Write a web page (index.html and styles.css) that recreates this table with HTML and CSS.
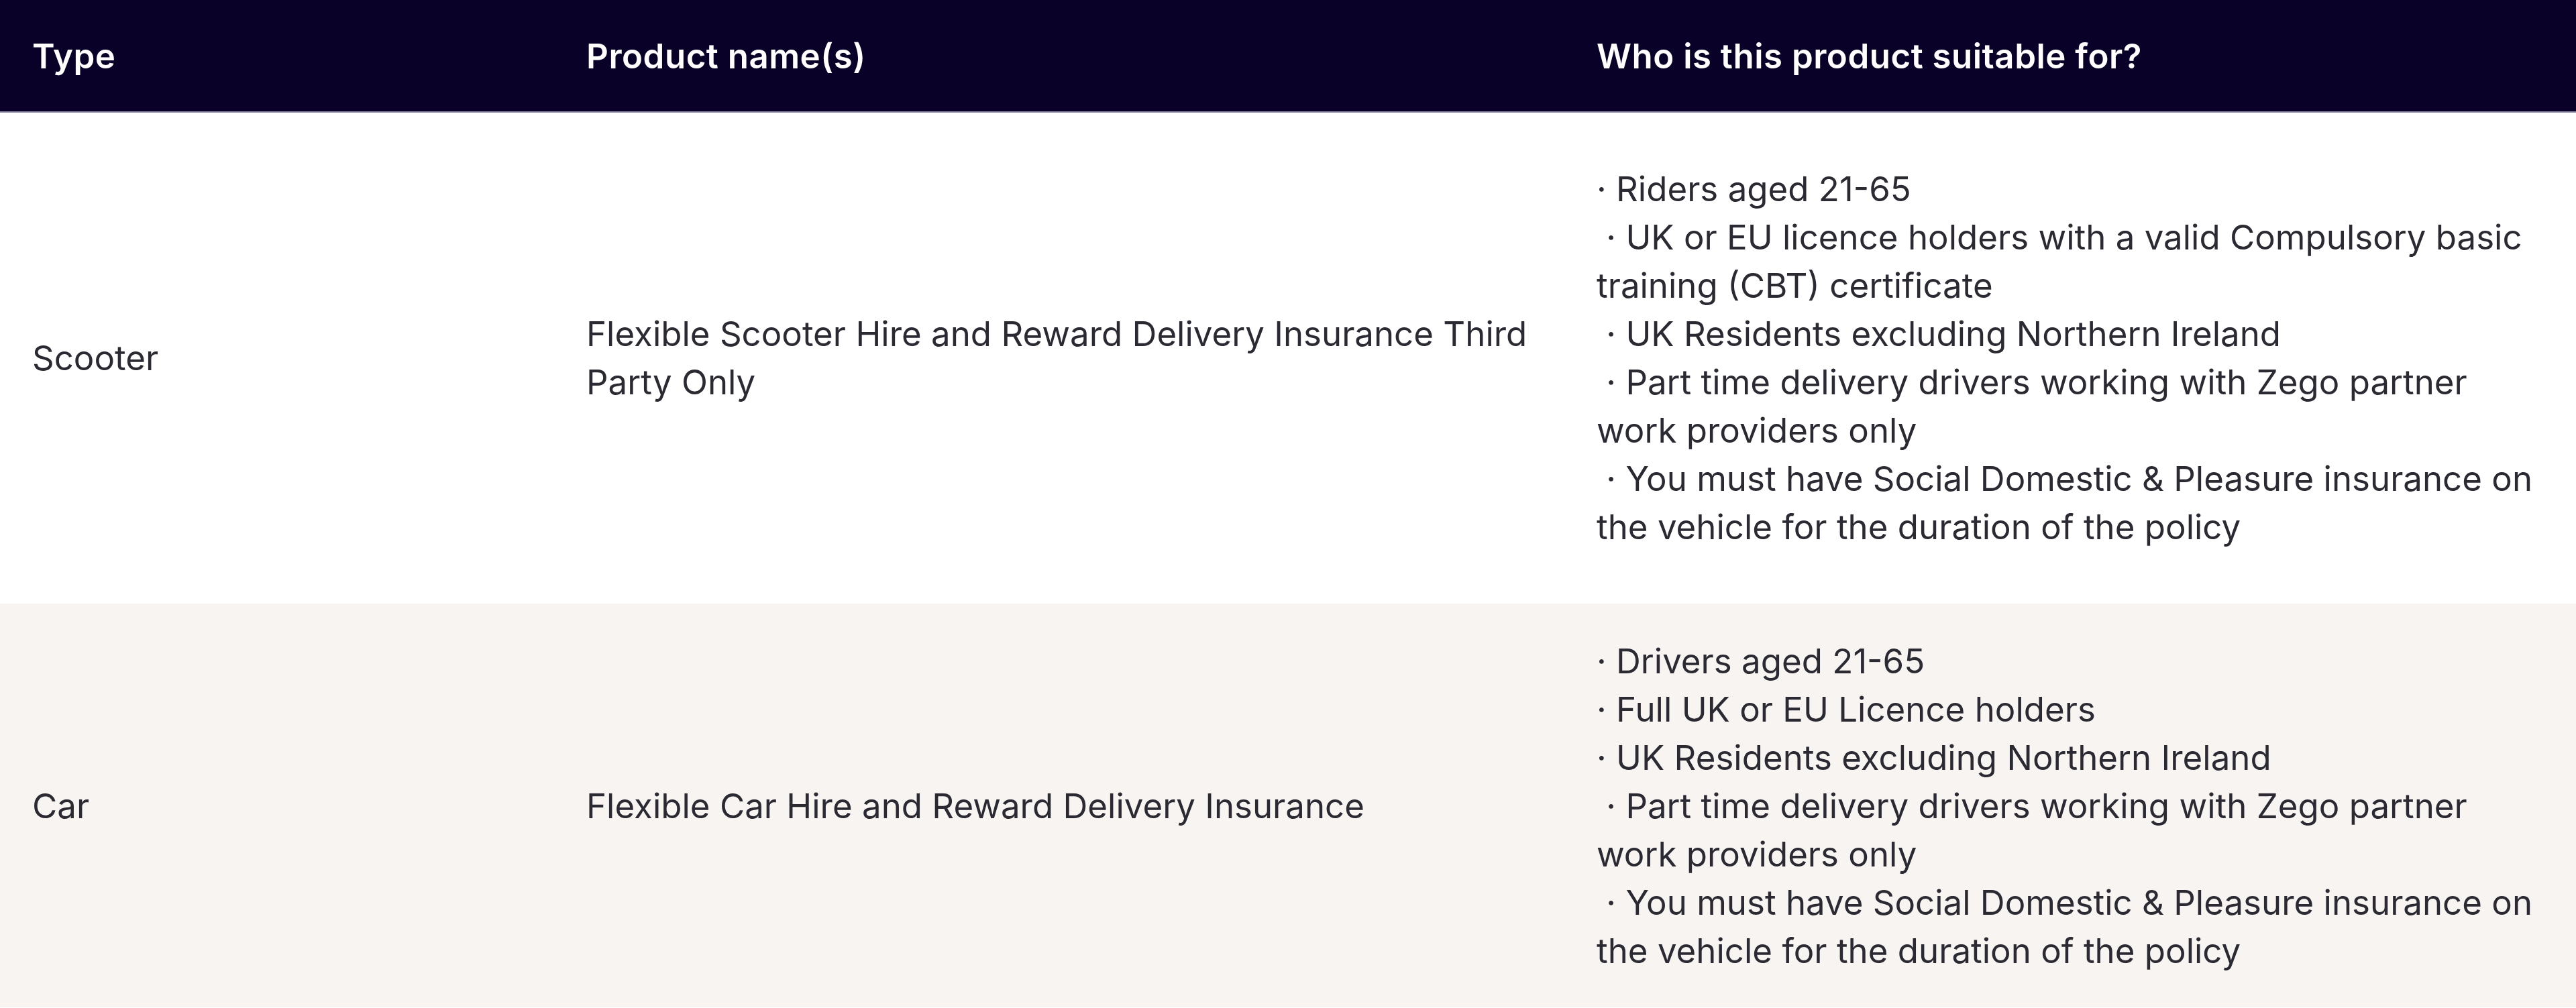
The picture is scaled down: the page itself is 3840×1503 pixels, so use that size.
FILE: index.html
```html
<!DOCTYPE html>
<html lang="en">
<head>
<meta charset="utf-8">
<title>Products</title>
<link rel="stylesheet" href="styles.css">
</head>
<body>
<table class="products">
  <colgroup>
    <col class="col-type">
    <col class="col-name">
    <col class="col-who">
  </colgroup>
  <thead>
    <tr>
      <th>Type</th>
      <th>Product name(s)</th>
      <th>Who is this product suitable for?</th>
    </tr>
  </thead>
  <tbody>
    <tr class="row-scooter">
      <td>Scooter</td>
      <td>Flexible Scooter Hire and Reward Delivery Insurance Third Party Only</td>
      <td class="who">· Riders aged 21-65<br>&nbsp;· UK or EU licence holders with a valid Compulsory basic training (CBT) certificate<br>&nbsp;· UK Residents excluding Northern Ireland<br>&nbsp;· Part time delivery drivers working with Zego partner work providers only<br>&nbsp;· You must have Social Domestic &amp; Pleasure insurance on the vehicle for the duration of the policy</td>
    </tr>
    <tr class="row-car">
      <td>Car</td>
      <td>Flexible Car Hire and Reward Delivery Insurance</td>
      <td class="who">· Drivers aged 21-65<br>· Full UK or EU Licence holders<br>· UK Residents excluding Northern Ireland<br>&nbsp;· Part time delivery drivers working with Zego partner work providers only<br>&nbsp;· You must have Social Domestic &amp; Pleasure insurance on the vehicle for the duration of the policy</td>
    </tr>
  </tbody>
</table>
</body>
</html>
```
FILE: styles.css
```css
html, body {
  margin: 0;
  padding: 0;
  background: #ffffff;
}

body {
  font-family: Inter, "Noto Sans", "Liberation Sans", sans-serif;
  color: #2b2a33;
}

.products {
  width: 3840px;
  border-collapse: collapse;
  table-layout: fixed;
  font-size: 51px;
  line-height: 72px;
}

.col-type { width: 826px; }
.col-name { width: 1506px; }
.col-who { width: auto; }

.products th {
  background: #0a0128;
  color: #ffffff;
  font-weight: 600;
  letter-spacing: 0.5px;
  text-align: left;
  padding: 48px 48px 46px 48px;
  border-bottom: 2px solid #8f8ca6;
  vertical-align: middle;
}

.products td {
  padding: 0 48px;
  vertical-align: middle;
  text-align: left;
}

.row-scooter td {
  background: #ffffff;
  padding-top: 78px;
  padding-bottom: 78px;
}

.row-car td {
  background: #f8f4f1;
  padding-top: 50px;
  padding-bottom: 48px;
}
```
